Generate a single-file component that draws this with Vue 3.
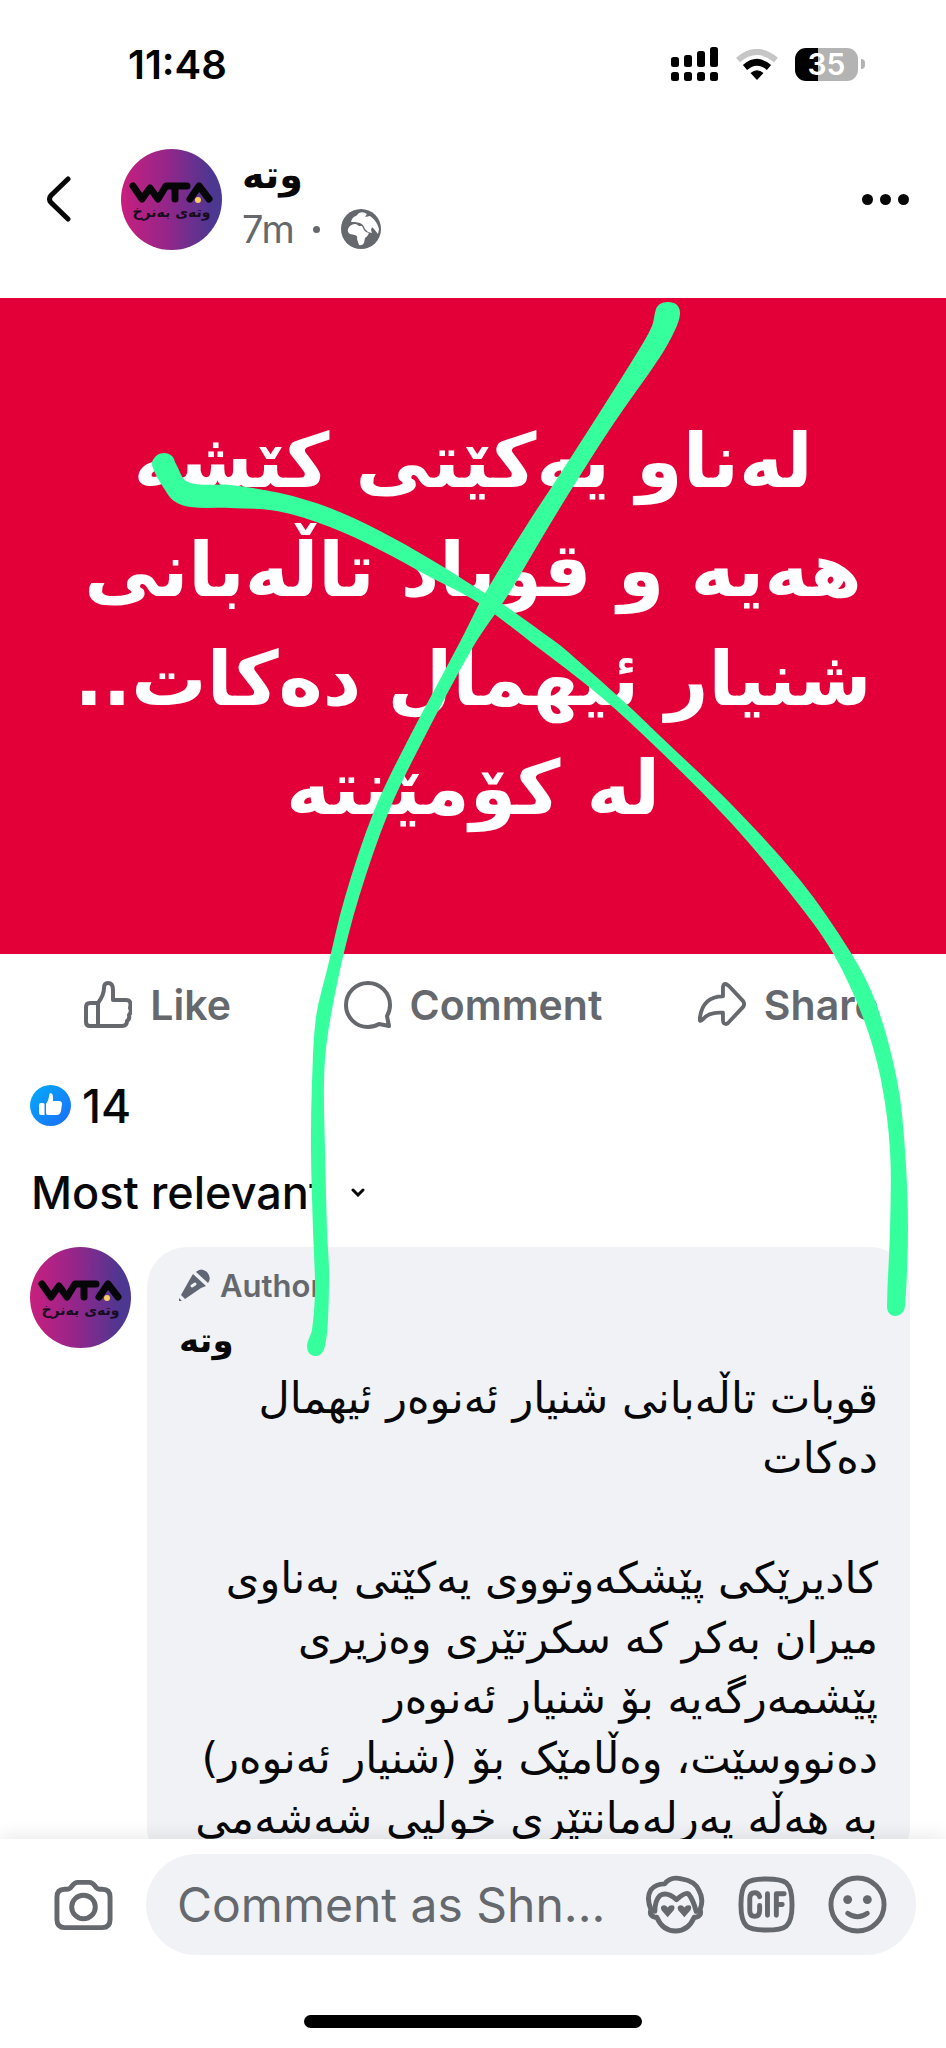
<script setup>
const comment = [
  'قوبات تاڵەبانی شنیار ئەنوەر ئیهمال',
  'دەکات',
  '',
  'کادیرێکی پێشکەوتووی یەکێتی بەناوی',
  'میران بەکر کە سکرتێری وەزیری',
  'پێشمەرگەیە بۆ شنیار ئەنوەر',
  'دەنووسێت، وەڵامێک بۆ (شنیار ئەنوەر)',
  'بە هەڵە پەرلەمانتێری خولیی شەشەمی',
]
const headline = ['لەناو یەکێتی کێشە', 'هەیە و قوباد تاڵەبانی', 'شنیار ئیهمال دەکات..', 'لە کۆمێنتە']
const bars = [10, 12, 16, 20]

// Outlines of the two marker strokes; each runs down one edge and back up the other.
const strokes = [
  [
    [656, 309], [660, 304], [668, 302], [677, 305], [680, 314], [675, 330], [660, 357], [614, 423], [571, 490], [543, 536],
    [508, 595], [473, 647], [422, 742], [389, 811], [359, 897], [340, 970], [327, 1040], [324, 1083], [325, 1150], [327, 1230],
    [329, 1270], [328, 1320], [325, 1346], [321, 1354], [315, 1356], [309, 1353], [307, 1346], [308, 1341], [312, 1330], [315, 1290], [313, 1230],
    [311, 1150], [312, 1083], [316, 1017], [327, 970], [345, 897], [374, 811], [409, 738], [461, 640], [484, 595],
    [530, 520], [551, 488], [593, 423], [637, 353], [652, 326],
  ],
  [
    [152, 465], [156, 456], [164, 453], [172, 456], [176, 464], [188, 482], [230, 485], [280, 493], [330, 508], [380, 531], [430, 559],
    [480, 590], [507, 607], [553, 640], [567, 651], [633, 710], [660, 736], [733, 806], [800, 880], [851, 953], [876, 1003],
    [897, 1080], [905, 1150], [908, 1230], [905, 1306], [902, 1313], [895, 1316], [889, 1313], [887, 1306], [890, 1230], [890, 1150],
    [881, 1080], [864, 1020], [833, 953], [793, 897], [733, 825], [657, 748], [600, 696], [532, 643], [477, 602], [430, 577],
    [380, 550], [330, 527], [277, 511], [230, 508], [190, 507], [174, 501], [165, 490],
  ],
]

function smooth(points) {
  const n = points.length
  const at = (i) => points[(i + n) % n]
  let d = `M${points[0].join(' ')}`
  for (let i = 0; i < n; i++) {
    const [a, b, c, e] = [at(i - 1), at(i), at(i + 1), at(i + 2)]
    const len = Math.hypot(c[0] - b[0], c[1] - b[1])
    const before = Math.hypot(c[0] - a[0], c[1] - a[1]) || 1
    const after = Math.hypot(e[0] - b[0], e[1] - b[1]) || 1
    const p = [b[0] + ((c[0] - a[0]) / before) * len / 3, b[1] + ((c[1] - a[1]) / before) * len / 3]
    const q = [c[0] - ((e[0] - b[0]) / after) * len / 3, c[1] - ((e[1] - b[1]) / after) * len / 3]
    d += `C${p.join(' ')} ${q.join(' ')} ${c.join(' ')}`
  }
  return d + 'Z'
}
</script>

<template>
  <main class="screen">
    <header class="status">
      <time class="clock">11:48</time>
      <div class="indicators">
        <svg class="signal" viewBox="0 0 48 34" aria-hidden="true">
          <g v-for="(h, i) in bars" :key="h">
            <rect :x="i * 13" :y="20 - h" width="8" :height="h" rx="2.5" />
            <rect :x="i * 13" y="25" width="8" height="9" rx="2.5" />
          </g>
        </svg>
        <svg class="wifi" viewBox="0 0 42 31" aria-hidden="true">
          <path d="M2 11Q21-5 40 11" stroke="#c6c6c6" stroke-width="6" fill="none" />
          <path d="M9 18.500Q21 8 33 18.500" stroke="#000" stroke-width="6.500" fill="none" />
          <path d="M14.500 24Q21 18.500 27.500 24L21 31Z" />
        </svg>
        <div class="battery"><span class="cell">35</span><i class="cap"></i></div>
      </div>
    </header>

    <header class="post-head">
      <button class="back" aria-label="Back">
        <svg viewBox="0 0 26 46"><path d="M22 3 5 19.500Q2 23 5 26.500L22 43" /></svg>
      </button>
      <div class="avatar">
        <svg viewBox="0 0 101 101" aria-hidden="true">
          <path class="mark" d="M12 37 21 50 29 39 37 50 45 37H66M54 37V50M69 50 78 37 88 50" />
          <circle cx="77" cy="51" r="3" fill="#f8cf63" />
        </svg>
        <span lang="ckb" dir="rtl">وتەی بەنرخ</span>
      </div>
      <div class="who">
        <h1 lang="ckb">وتە</h1>
        <p class="meta"><span>7m</span><i class="dot"></i>
          <svg viewBox="0 0 40 40" role="img" aria-label="Public">
            <circle cx="20" cy="20" r="20" fill="#65686c" />
            <path fill="#fff" d="M10 13Q11 8 15 7L18 4Q22 2 26 5L24 8 29 7Q36 12 38 20L37 25 33 20 31 18 30 21 31 24 27 23 24 20 22 16 19 14 14 13Z" />
            <path fill="#fff" d="M7 20Q9 15 15 15L18 17 21 17 23 21 25 23 28 24Q27 27 24 29L23 34Q21 37 18 36L16 30Q17 27 14 26L9 25Q6 23 7 20Z" />
          </svg>
        </p>
      </div>
      <button class="more" aria-label="More options"><i></i><i></i><i></i></button>
    </header>

    <section class="poster" lang="ckb" dir="rtl">
      <p v-for="line in headline" :key="line">{{ line }}</p>
    </section>

    <nav class="actions">
      <button>
        <svg viewBox="0 0 48 48"><path d="M14 22H6Q2 22 2 26V41Q2 45 6 45H38Q43 45 43 40 46 38 45 34 48 31 46 27 48 19 42 19H29V9Q29 2 24 2 20 2 20 7 20 14 14 22V45" /></svg>
        <span>Like</span>
      </button>
      <button>
        <svg viewBox="0 0 48 48"><path d="M43 35Q46 30 46 24A22 22 0 1 0 24 46Q30 46 35 43L45 45Z" /></svg>
        <span>Comment</span>
      </button>
      <button>
        <svg viewBox="0 0 50 48"><path d="M26 15V6Q26 2 29 2L32 4 47 20Q49 23 47 26L32 42Q30 45 27 43 26 42 26 40V32Q11 31 5 39 1 43 2 37 5 15 26 15Z" /></svg>
        <span>Share</span>
      </button>
    </nav>

    <div class="reactions">
      <svg viewBox="0 0 41 41" role="img" aria-label="Likes">
        <defs><linearGradient id="like-blue" x1="0" y1="0" x2="1" y2="1"><stop offset="0" stop-color="#02adfc" /><stop offset="1" stop-color="#1d6bf8" /></linearGradient></defs>
        <circle cx="20.500" cy="20.500" r="20.500" fill="url(#like-blue)" />
        <path fill="#fff" d="M11 18H13Q14.500 18 14.500 19.500V30H11Q9 30 9 28V20Q9 18 11 18ZM16 19Q19 15 19 11 19 8 21 8 23 9 23 12V16H29Q32 16 32 19L31 26Q30 30 27 30H18Q16 30 16 28Z" />
      </svg>
      <span>14</span>
    </div>

    <button class="sort"><span>Most relevant</span>
      <svg viewBox="0 0 14 9"><path d="M2 2 7 7 12 2" /></svg>
    </button>

    <section class="thread">
      <div class="avatar">
        <svg viewBox="0 0 101 101" aria-hidden="true">
          <path class="mark" d="M12 37 21 50 29 39 37 50 45 37H66M54 37V50M69 50 78 37 88 50" />
          <circle cx="77" cy="51" r="3" fill="#f8cf63" />
        </svg>
        <span lang="ckb" dir="rtl">وتەی بەنرخ</span>
      </div>
      <article class="bubble">
        <p class="badge">
          <svg viewBox="0 0 32 32" aria-hidden="true"><path d="M17 3Q22-2 28 3 33 9 29 14ZM14 5 27 17 22 19 6 30 2 26 11 10ZM0 29 3 32 0 32Z" /><path d="M13 17 16 15" stroke="#f0f2f6" stroke-width="3" stroke-linecap="round" /></svg>
          <span>Author</span>
        </p>
        <h2 lang="ckb">وتە</h2>
        <div class="comment" lang="ckb" dir="rtl">
          <p v-for="(line, i) in comment" :key="i">{{ line }}</p>
        </div>
      </article>
    </section>

    <footer class="composer">
      <div class="compose-row">
        <button class="camera" aria-label="Camera">
          <svg viewBox="0 0 60 52"><path d="M11 10H13Q16 10 18 7 21 3 24 3H36Q39 3 42 7 44 10 47 10H49Q57 10 57 18V41Q57 49 49 49H11Q3 49 3 41V18Q3 10 11 10Z" /><circle cx="30" cy="28" r="12" /></svg>
        </button>
        <div class="field">
          <input type="text" placeholder="Comment as Shn..." aria-label="Comment" />
          <button aria-label="Avatar stickers">
            <svg viewBox="0 0 60 60"><path d="M9 43Q3 41 5 35 0 23 5 15 10 9 19 9 25 1 36 4 50 6 54 16 59 25 55 35 57 41 51 43H49Q43 57 30 57 17 57 11 43Z" /><path d="M9 37Q9 26 14 21 21 16 31 25 40 17 43 19 48 25 51 37" /><path class="heart" d="M22 43 16 36Q14 32 17 31 20 30 22 33 24 30 28 31 30 33 28 36ZM39 43 33 36Q31 32 34 31 37 30 39 33 41 30 45 31 47 33 45 36Z" /></svg>
          </button>
          <button aria-label="GIF">
            <svg viewBox="0 0 60 60"><path d="M30 4C49 4 56 6 56 30S49 56 30 56 4 54 4 30 11 4 30 4Z" /><path d="M23 22Q22 18 18 18 13 18 13 24V36Q13 42 18 42 23 42 23 36V31M31 19V41M40 41V19H48M40 30H46" /></svg>
          </button>
          <button aria-label="Emoji">
            <svg viewBox="0 0 60 60"><circle cx="30" cy="30" r="27" /><circle class="eye" cx="20" cy="25" r="4.500" /><circle class="eye" cx="40" cy="25" r="4.500" /><path d="M20 39Q30 46 40 39" /></svg>
          </button>
        </div>
      </div>
      <div class="home-bar"></div>
    </footer>

    <svg class="scribble" viewBox="0 0 946 2048" aria-hidden="true">
      <path v-for="(points, i) in strokes" :key="i" :d="smooth(points)" />
    </svg>
  </main>
</template>

<style>
body { margin: 0; background: #fff; }
</style>

<style scoped>
* { box-sizing: border-box; }
.screen { position: relative; height: 100vh; overflow: hidden; display: flex; flex-direction: column; background: #fff; color: #080809; font-family: Inter, "DejaVu Sans", sans-serif; }
h1, h2, p { margin: 0; }
button { border: 0; background: none; padding: 0; font: inherit; color: inherit; }
svg { display: block; flex: none; }

.status { flex: none; height: 128px; padding: 0 81px 0 128px; display: flex; align-items: center; justify-content: space-between; }
.clock { font-size: 40px; font-weight: 600; color: #000; }
.indicators { display: flex; align-items: center; gap: 17px; }
.signal { width: 48px; height: 34px; }
.wifi { width: 42px; height: 31px; }
.battery { display: flex; align-items: center; gap: 3px; }
.cell { width: 63px; height: 33px; border-radius: 11px; background: linear-gradient(90deg, #000 36%, #b3b3b3 36%); color: #fff; font-size: 30px; line-height: 33px; font-weight: 600; text-align: center; }
.cap { width: 4px; height: 10px; border-radius: 0 4px 4px 0; background: #b3b3b3; }

.post-head { flex: none; height: 170px; padding: 21px 37px 49px 46px; display: flex; align-items: center; }
.back { width: 75px; }
.back svg { width: 26px; height: 46px; fill: none; stroke: #080809; stroke-width: 5; stroke-linecap: round; }
.avatar { position: relative; flex: none; width: 101px; height: 101px; border-radius: 50%; background: linear-gradient(90deg, #c81f7e, #94268a 45%, #4c3791 90%); overflow: hidden; }
.mark { fill: none; stroke: #060508; stroke-width: 7; stroke-linejoin: round; stroke-linecap: round; }
.avatar span { position: absolute; top: 54px; left: 0; right: 0; text-align: center; font: 700 14px/18px "DejaVu Sans", sans-serif; color: #180c20; }
.who { margin-left: 20px; padding-top: 6px; display: flex; flex-direction: column; }
.who h1 { font: 700 38px/54px "DejaVu Sans", sans-serif; }
.meta { display: flex; align-items: center; color: #65686c; font-size: 38px; line-height: 54px; }
.meta svg { width: 40px; height: 40px; }
.dot { width: 7px; height: 7px; border-radius: 50%; background: #65686c; margin: 0 21px 0 18px; }
.more { margin-left: auto; display: flex; gap: 7px; }
.more i { width: 11px; height: 11px; border-radius: 50%; background: #080809; }

.poster { flex: none; height: 656px; background: #e30039; color: #fff; text-align: center; padding-top: 109px; font: 700 75px/109px "DejaVu Sans", sans-serif; white-space: nowrap; }

.actions { flex: none; height: 101px; display: grid; grid-template-columns: repeat(3, 1fr); align-items: center; color: #65686c; font-size: 41px; font-weight: 600; }
.actions button { display: flex; align-items: center; justify-content: center; gap: 18px; }
.actions svg { width: 48px; height: 48px; fill: none; stroke: #65686c; stroke-width: 4; stroke-linejoin: round; stroke-linecap: round; }
.reactions { flex: none; height: 101px; padding-left: 30px; display: flex; align-items: center; gap: 11px; font-size: 46px; font-weight: 500; }
.reactions svg { width: 41px; height: 41px; }
.sort { flex: none; align-self: flex-start; height: 72px; padding-left: 31px; display: flex; align-items: center; gap: 27px; font-size: 45px; font-weight: 500; }
.sort svg { width: 14px; height: 9px; fill: none; stroke: #080809; stroke-width: 3; stroke-linecap: round; }

.thread { flex: 1; min-height: 0; overflow: hidden; padding: 19px 36px 0 30px; display: flex; align-items: flex-start; gap: 16px; }
.bubble { flex: 1; min-width: 0; border-radius: 40px; background: #f0f2f6; padding: 19px 32px; }
.badge { display: flex; align-items: center; gap: 9px; height: 38px; color: #65686c; font-size: 31px; font-weight: 600; }
.badge svg { width: 32px; height: 32px; fill: #606674; }
.bubble h2 { margin-top: 8px; font: 700 34px/56px "DejaVu Sans", sans-serif; }
.comment { font: 400 43px/60px "DejaVu Sans", sans-serif; white-space: nowrap; }
.comment p { min-height: 60px; }

.composer { position: relative; flex: none; background: #fff; box-shadow: 0 -4px 16px rgba(0, 0, 0, .08); padding: 15px 0 20px; }
.compose-row { display: flex; align-items: center; gap: 33px; padding: 0 30px 0 54px; }
.camera svg { width: 59px; height: 52px; fill: none; stroke: #65686c; stroke-width: 5; }
.field { flex: 1; min-width: 0; height: 101px; border-radius: 51px; background: #f0f2f6; padding: 0 29px 0 31px; display: flex; align-items: center; gap: 32px; }
.field input { flex: 1; min-width: 0; border: 0; outline: 0; padding: 0; background: none; font: 400 48px/60px Inter, sans-serif; color: #080809; }
.field input::placeholder { color: #65686c; opacity: 1; }
.field svg { width: 59px; height: 59px; fill: none; stroke: #65686c; stroke-width: 5; stroke-linecap: round; stroke-linejoin: round; }
.field .heart, .field .eye { fill: #65686c; stroke: none; }
.home-bar { width: 338px; height: 13px; margin: 60px auto 0; border-radius: 7px; background: #000; }
.scribble { position: absolute; top: 0; left: 0; width: 100%; pointer-events: none; fill: #36ff9d; }
</style>
